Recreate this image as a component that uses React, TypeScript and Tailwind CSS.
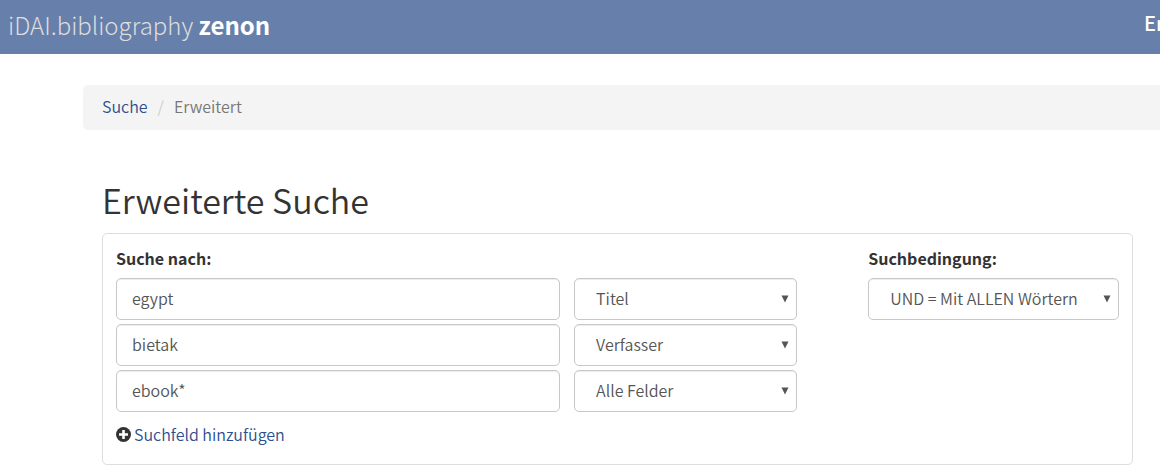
import { useState, type ReactNode } from "react";

const FIELDS = ["Alle Felder", "Titel", "Verfasser"];

const CONTROL =
  "h-[42px] w-full rounded-[5px] border border-[#c8c8c8] bg-white pb-[2px] text-base text-[#555555] shadow-[inset_0_1px_1px_rgba(0,0,0,0.075)] outline-none focus:border-[#6780ab]";

type Row = { id: number; term: string; field: string };

function Select({
  id,
  label,
  value,
  onChange,
  children,
}: {
  id: string;
  label?: string;
  value: string;
  onChange: (value: string) => void;
  children: ReactNode;
}) {
  return (
    <div className="relative min-w-0">
      <select
        id={id}
        aria-label={label}
        value={value}
        onChange={(e) => onChange(e.target.value)}
        className={`${CONTROL} appearance-none pl-[21px] pr-8`}
      >
        {children}
      </select>
      <svg
        viewBox="0 0 8 8"
        aria-hidden="true"
        className="pointer-events-none absolute right-2 top-[17px] size-2 fill-[#555555]"
      >
        <path d="M0.5 0.5H7.5L4 7.5Z" />
      </svg>
    </div>
  );
}

export default function App() {
  const [rows, setRows] = useState<Row[]>([
    { id: 1, term: "egypt", field: "Titel" },
    { id: 2, term: "bietak", field: "Verfasser" },
    { id: 3, term: "ebook*", field: "Alle Felder" },
  ]);
  const [join, setJoin] = useState("AND");

  const update = (id: number, patch: Partial<Row>) =>
    setRows(rows.map((row) => (row.id === id ? { ...row, ...patch } : row)));

  return (
    <div className="overflow-x-hidden bg-white font-['Noto_Sans_CJK_SC','Open_Sans',sans-serif] text-base leading-6 font-[350] text-[#333333]">
      <header className="flex h-[54px] items-center justify-between bg-[#6780ab] pb-1 pl-2 text-white">
        <a href="#" className="text-2xl leading-8 font-light text-[#dddddd]">
          iDAI.bibliography <strong className="font-bold text-white">zenon</strong>
        </a>
        <nav className="w-4 overflow-hidden pb-1 text-xl leading-6 font-medium whitespace-nowrap">
          <a href="#">En</a>
        </nav>
      </header>

      <nav aria-label="Brotkrumen" className="mt-[31px] ml-[83px] rounded-l-[5px] bg-[#f4f4f4] pt-[9px] pr-[19px] pb-3 pl-[19px]">
        <ol className="flex gap-[10px]">
          <li>
            <a href="#" className="text-[#2d4f8e]">Suche</a>
          </li>
          <li aria-hidden="true" className="text-[#cccccc]">/</li>
          <li className="text-[#777777]">Erweitert</li>
        </ol>
      </nav>

      <main className="mt-[50px] mr-[27px] ml-[102px] pb-3">
        <h1 className="text-[34px] leading-10 font-[350]">Erweiterte Suche</h1>
        <form
          onSubmit={(e) => e.preventDefault()}
          className="mt-[13px] flex gap-[71px] rounded-[5px] border border-[#dddddd] px-[13px] pt-3 pb-[18px]"
        >
          <fieldset className="min-w-0 flex-1">
            <legend className="font-bold">Suche nach:</legend>
            <div className="mt-2 flex flex-col gap-1">
              {rows.map((row) => (
                <div key={row.id} className="grid grid-cols-[199fr_100fr] gap-[14px]">
                  <input
                    type="text"
                    aria-label="Suchbegriff"
                    value={row.term}
                    onChange={(e) => update(row.id, { term: e.target.value })}
                    className={`${CONTROL} px-[15px]`}
                  />
                  <Select
                    id={`field-${row.id}`}
                    label="Suchfeld"
                    value={row.field}
                    onChange={(field) => update(row.id, { field })}
                  >
                    {FIELDS.map((field) => (
                      <option key={field}>{field}</option>
                    ))}
                  </Select>
                </div>
              ))}
            </div>
            <button
              type="button"
              onClick={() => setRows([...rows, { id: rows.length + 1, term: "", field: "Alle Felder" }])}
              className="mt-[10px] flex items-center gap-[2px] text-[#2d4f8e]"
            >
              <svg viewBox="0 0 16 16" aria-hidden="true" className="size-4">
                <circle cx="7.5" cy="8.5" r="7.5" fill="#333333" />
                <path d="M6.2 4h2.6v3.2H12v2.6H8.8V13H6.2V9.8H3V7.2h3.2z" fill="#ffffff" />
              </svg>
              Suchfeld hinzufügen
            </button>
          </fieldset>

          <div className="w-1/4">
            <label htmlFor="join" className="mb-2 block font-bold">
              Suchbedingung:
            </label>
            <Select id="join" value={join} onChange={setJoin}>
              <option value="AND">UND = Mit ALLEN Wörtern</option>
            </Select>
          </div>
        </form>
      </main>
    </div>
  );
}
